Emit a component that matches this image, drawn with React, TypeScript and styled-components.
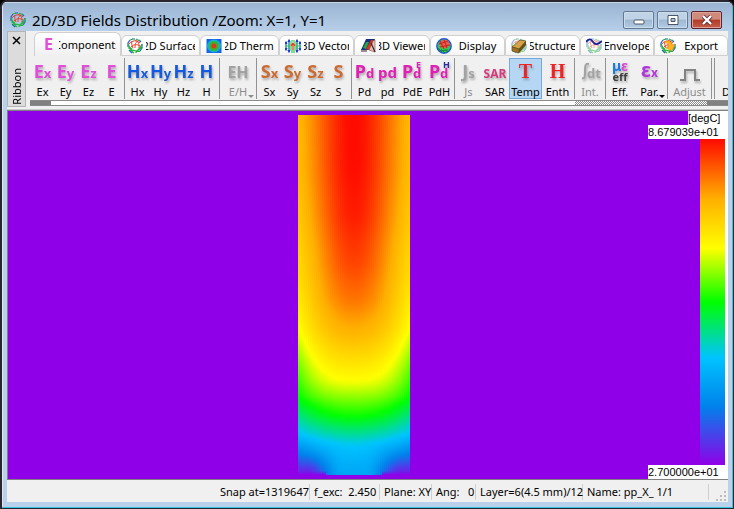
import React from "react";
import styled, { createGlobalStyle, css } from "styled-components";

const UI_FONT = `"Noto Sans", "DejaVu Sans", sans-serif`;

const GlobalStyle = createGlobalStyle`
  * { box-sizing: border-box; }
  body { margin: 0; background: #000; font-family: ${UI_FONT}; color: #000; }
  button { font: inherit; color: inherit; padding: 0; margin: 0; border: 0; background: none; }
`;

/* ---------- window frame ---------- */

const Window = styled.div`
  display: flex;
  flex-direction: column;
  height: 100vh;
  padding: 0 5px 6px;
  background: #b9d1ea;
  border: solid #2a2630;
  border-width: 2px 1px 1px 2px;
  border-radius: 7px 7px 0 0;
  box-shadow: inset -1px -1px 0 #31c5e2, inset 1px 1px 0 #dce9f5;
  overflow: hidden;
`;

const TitleBar = styled.header`
  display: flex;
  align-items: center;
  flex: none;
  height: 29px;
  margin: 0 -4px;
  padding: 6px 10px 0 7px;
  gap: 6px;
  background: linear-gradient(#9ab4d2, #b7cfe9);
  border-top: 1px solid #c7d7e8;
`;

const Title = styled.h1`
  flex: 1;
  margin: 0;
  font-size: 15px;
  font-weight: 400;
  line-height: 20px;
  white-space: nowrap;
  overflow: hidden;
`;

const WindowButtons = styled.div`
  display: flex;
  gap: 3px;
`;

const WindowButton = styled.button<{ $close?: boolean }>`
  display: grid;
  place-items: center;
  width: 31px;
  height: 18px;
  border: 1px solid ${(p) => (p.$close ? "#5b2230" : "#64788f")};
  border-radius: 2px;
  box-shadow: inset 0 0 0 1px ${(p) => (p.$close ? "#dda398" : "#cbdced")};
  background: ${(p) =>
    p.$close
      ? "linear-gradient(#d08a7c 0 45%, #b43a26 50%, #c4604a)"
      : "linear-gradient(#bfd2e6 0 45%, #9db7d3 50%, #b4cbe4)"};
`;

const Client = styled.main`
  flex: 1;
  min-height: 0;
  display: flex;
  flex-direction: column;
  background: #f0f0f0;
`;

/* ---------- ribbon ---------- */

const Ribbon = styled.section`
  display: flex;
  flex: none;
  height: 76px;
`;

const Grip = styled.div`
  display: flex;
  flex-direction: column;
  align-items: center;
  justify-content: space-between;
  flex: none;
  width: 19px;
  padding: 3px 0 1px;
  background: #dcdcdc;
  border: 1px solid #b4b4b4;
`;

const GripClose = styled.button`
  display: grid;
  width: 11px;
  height: 11px;
  place-items: center;
`;

const GripLabel = styled.span`
  writing-mode: vertical-rl;
  transform: rotate(180deg);
  font-size: 11px;
  line-height: 16px;
`;

const RibbonBody = styled.div`
  flex: 1;
  min-width: 0;
  display: flex;
  flex-direction: column;
  padding-left: 4px;
`;

const Tabs = styled.div`
  display: flex;
  align-items: flex-end;
  height: 25px;
  padding-left: 4px;
`;

const Tab = styled.button<{ $active?: boolean; $grow: number }>`
  flex: ${(p) => p.$grow} 1 0;
  min-width: 0;
  display: flex;
  align-items: center;
  gap: 3px;
  height: ${(p) => (p.$active ? 24 : 21)}px;
  padding: 0 4px 0 5px;
  border: 1px solid #d0d0d0;
  border-bottom: ${(p) => (p.$active ? 0 : 1)}px solid #d0d0d0;
  border-radius: 6px 6px 0 0;
  background: ${(p) => (p.$active ? "linear-gradient(#fff, #f0f0f0)" : "linear-gradient(#fff 40%, #f4f4f4)")};
`;

const TabText = styled.span`
  flex: 1;
  min-width: 0;
  display: flex;
  justify-content: center;
  overflow: hidden;
  font-size: 11px;
  line-height: 16px;
  white-space: nowrap;
`;

const Tools = styled.div`
  display: flex;
  height: 44px;
  padding: 2px 0 1px 1px;
  overflow: hidden;
`;

const Separator = styled.span`
  flex: none;
  width: 1px;
  margin: 0 1px;
  background: #929292;
`;

const Tool = styled.button<{ $width: number; $selected?: boolean }>`
  position: relative;
  flex: none;
  display: flex;
  flex-direction: column;
  align-items: center;
  width: ${(p) => p.$width}px;
  font-size: 11px;
  line-height: 15px;
  white-space: nowrap;
  &:disabled { color: #8c8c8c; }
  ${(p) =>
    p.$selected &&
    css`
      background: #b5d7f3;
      box-shadow: inset 0 0 0 1px #74a9dc;
    `}
`;

const ToolIcon = styled.svg`
  display: block;
  flex: none;
  width: 100%;
  height: 26px;
  overflow: visible;
  filter: drop-shadow(1px 2px 1px rgba(0, 0, 0, 0.28));
`;

const DropArrow = styled.i`
  position: absolute;
  right: 1px;
  bottom: 1px;
  border: solid transparent;
  border-width: 3px 3px 0;
  border-top-color: currentColor;
`;

const ScrollStrip = styled.div`
  display: flex;
  height: 6px;
  border: solid #8a8a8a;
  border-width: 1px 0;
  background: #fff;
`;

const StripEnd = styled.span`
  width: 21px;
  background: #808080;
`;

const StripTrack = styled.span`
  width: 132px;
  margin-left: auto;
  background: repeating-conic-gradient(#8c8c8c 0 25%, #fff 0 50%) 0 0 / 2px 2px;
`;

/* ---------- plot ---------- */

const Plot = styled.section`
  flex: 1;
  min-height: 0;
  display: flex;
  margin-top: 3px;
  border: solid #808080;
  border-width: 1px 0 1px 1px;
  background: #8f00e8;
  box-shadow: 0 -1px 0 #c8c8c8;
`;

const Field = styled.div`
  flex: 1;
  min-height: 0;
  display: flex;
  justify-content: center;
  padding: 4px 1px 4px 0;
`;

const HeatSvg = styled.svg`
  display: block;
  width: 112px;
  height: 100%;
`;

const Legend = styled.aside`
  display: flex;
  flex-direction: column;
  align-items: flex-end;
  width: 28px;
  border-right: 3px solid #fff;
`;

const LegendText = styled.span<{ $wide?: boolean }>`
  flex: none;
  height: 14px;
  width: ${(p) => (p.$wide ? 77 : 37)}px;
  background: #fff;
  font: 11px / 14px "Liberation Sans", Arial, sans-serif;
  white-space: nowrap;
`;

const ColorBar = styled.div`
  flex: 1;
  width: 25px;
`;

/* ---------- status bar ---------- */

const Status = styled.footer`
  display: flex;
  align-items: center;
  justify-content: flex-end;
  flex: none;
  height: 22px;
  padding-top: 2px;
  font-size: 11px;
  line-height: 16px;
  white-space: pre;
`;

const StatusCell = styled.span<{ $width?: number }>`
  width: ${(p) => (p.$width ? `${p.$width}px` : "auto")};
  padding: 0 0 0 4px;
  border-right: 1px solid #cfcfcf;
`;

const SizeGrip = styled.svg`
  align-self: flex-end;
  width: 11px;
  height: 10px;
  margin: 0 1px 1px 7px;
`;

/* ---------- temperature field ---------- */

type Point = [number, number];

const PALETTE: [number, number[]][] = [
  [0, [144, 0, 232]],
  [0.18, [0, 130, 235]],
  [0.33, [0, 196, 255]],
  [0.5, [0, 255, 0]],
  [0.665, [255, 255, 0]],
  [0.817, [255, 175, 0]],
  [1, [255, 10, 0]],
];

const rgb = (t: number) => {
  const v = Math.max(0, Math.min(1, t));
  let i = 1;
  while (i < PALETTE.length - 1 && v > PALETTE[i][0]) i++;
  const [a, ca] = PALETTE[i - 1];
  const [b, cb] = PALETTE[i];
  const k = (v - a) / (b - a);
  return `rgb(${ca.map((c, n) => Math.round(c + (cb[n] - c) * k)).join(",")})`;
};

const BAR_GRADIENT = `linear-gradient(to top, ${PALETTE.map(([t]) => `${rgb(t)} ${t * 100}%`).join(", ")})`;

const AXIS: Point[] = [[0, 1], [50, 0.998], [100, 0.98], [150, 0.935], [185, 0.882], [220, 0.8], [266, 0.665], [302, 0.5], [331, 0.33], [345, 0.29], [360, 0.26]];
const WALL: Point[] = [[0, 0.8], [60, 0.79], [110, 0.765], [160, 0.73], [190, 0.695], [212, 0.665], [250, 0.57], [281, 0.5], [318, 0.33], [338, 0.18], [352, 0.08], [360, 0.02]];

const sample = (points: Point[], y: number) => {
  let i = 1;
  while (i < points.length - 1 && y > points[i][0]) i++;
  const [a, va] = points[i - 1];
  const [b, vb] = points[i];
  return va + ((vb - va) * (y - a)) / (b - a);
};

const smooth = (a: number, b: number, v: number) => {
  const k = Math.max(0, Math.min(1, (v - a) / (b - a)));
  return k * k * (3 - 2 * k);
};

const temperature = (x: number, y: number) => {
  const u = Math.abs(x);
  if (y > 356 && u > 0.5) return 0;
  const top = (Math.pow(u, 1.8) + (1 - Math.cos(Math.PI * u)) / 2) / 2;
  const middle = Math.pow(u, 2.5);
  const lower = Math.pow(u, 1.8);
  const base = smooth(0.2, 0.85, u);
  const k1 = smooth(130, 265, y);
  const k2 = smooth(275, 325, y);
  const k3 = smooth(325, 356, y);
  let w = top * (1 - k1) + middle * k1;
  w = w * (1 - k2) + lower * k2;
  w = w * (1 - k3) + base * k3;
  return sample(AXIS, y) * (1 - w) + sample(WALL, y) * w;
};

const COLUMNS = Array.from({ length: 56 }, (_, i) => i);
const ROWS = Array.from({ length: 91 }, (_, i) => i * 4);

const HeatMap = () => (
  <HeatSvg viewBox="0 0 112 360" preserveAspectRatio="none" shapeRendering="crispEdges" role="img" aria-label="Temperature distribution">
    <defs>
      {COLUMNS.map((c) => (
        <linearGradient key={c} id={`col${c}`} x1="0" y1="0" x2="0" y2="1">
          {ROWS.map((y) => (
            <stop key={y} offset={y / 360} stopColor={rgb(temperature((c * 2 + 1 - 56) / 56, y))} />
          ))}
        </linearGradient>
      ))}
    </defs>
    {COLUMNS.map((c) => (
      <rect key={c} x={c * 2} y="0" width="2" height="360" fill={`url(#col${c})`} />
    ))}
  </HeatSvg>
);

/* ---------- icons ---------- */

const Sphere = ({ tone = "mesh" }: { tone?: "mesh" | "solid" | "pale" }) => (
  <g fill="none" strokeWidth="1.2" opacity={tone === "pale" ? 0.5 : 1}>
    {tone === "solid" ? (
      <>
        <circle cx="8" cy="8" r="7.2" fill="#35c653" stroke="#2156d8" strokeWidth="1.400" />
        <path d="M3 5l4-3.500 5 1 2 4-4 4-5-1z" fill="#f4564a" />
        <path d="M4 3l4 8M8 2l3 8M3 6l9-3M4 9l10-2" stroke="#a9211c" strokeWidth="0.800" />
        <path d="M2 10l4 4M5 11l4 4M9 12l3 2M3 13l9-1" stroke="#137a35" strokeWidth="0.800" />
      </>
    ) : (
      <>
        <path d="M1 9V5l2-3M5 1h3M2 12l3 3M15 6v4l-2 3M12 2l2 2" stroke="#2759d8" />
        <path d="M3 2l3-1M9 1l4 2M1 10c3-1 3 4 6 5M9 15c0-4 5-3 6-6M3 13c3-3 7 2 10 0M1 6c1 3 2 4 4 5M15 6c-1 3-2 4-4 6" stroke="#23b53c" />
        <path d="M2 6c3-4 8-4 11-1M4 9c3-3 6-3 9-1M5 3c-1 3 0 4 1 7M11 3c-3 2-3 4-3 7M8 2c4 2 4 4 4 8" stroke="#e8402c" strokeWidth="1" />
      </>
    )}
  </g>
);

const TAB_ICONS: Record<string, React.ReactNode> = {
  components: (
    <text x="4" y="13" fontSize="16" fontWeight="700" fill="#e04fd8">E</text>
  ),
  surface: <Sphere />,
  thermal: (
    <g>
      <rect x="0.500" y="1" width="15" height="14" fill="#1763ea" />
      <ellipse cx="8" cy="8" rx="7" ry="6.500" fill="#19a8e8" />
      <circle cx="8" cy="8" r="5.500" fill="#1dc05c" />
      <circle cx="8" cy="8" r="3.800" fill="#5d9b1e" />
      <circle cx="8" cy="8" r="2.300" fill="#e0351f" />
    </g>
  ),
  vector: (
    <g fill="none" strokeWidth="1.200">
      <path d="M1 4v8M4 2v12M12 2v12M15 4v8" stroke="#1e5ae0" />
      <path d="M0 6l1-2 1 2M0 10l1 2 1-2M3 4l1-2 1 2M3 12l1 2 1-2M11 4l1-2 1 2M11 12l1 2 1-2M14 6l1-2 1 2M14 10l1 2 1-2" stroke="#173bd0" />
      <path d="M0 8h5M11 8h5M7 2v2M9 2v2M7 12v3M9 12v3M3 6h2M11 6h2M3 10h2M11 10h2M6 4v8M10 4v8" stroke="#2fce36" />
      <path d="M8 5v7M6 8l2-3 2 3" stroke="#ee2c24" />
    </g>
  ),
  viewer: (
    <g>
      <path d="M1 12L6 1h9l-3 11z" fill="#19307c" />
      <path d="M3 10l3-6h3l-3 7z" fill="#2aa545" />
      <path d="M6 11l5-9h2l-4 10z" fill="#e0301c" />
      <path d="M9 12l4-9 2-1v12z" fill="#e3c4b8" stroke="#8d5b50" strokeWidth="0.700" />
      <path d="M11 5l4 9M1 13h6" stroke="#42202a" strokeWidth="1.200" />
    </g>
  ),
  display: <Sphere tone="solid" />,
  structure: (
    <g>
      <Sphere tone="pale" />
      <path d="M1 9l8-7 6 1-7 8z" fill="#d5a347" stroke="#634718" strokeWidth="0.700" />
      <path d="M1 9l7 2v4l-7-2z" fill="#9f7427" stroke="#634718" strokeWidth="0.700" />
      <path d="M8 11l7-8v4l-7 8z" fill="#6a4a18" />
    </g>
  ),
  envelope: (
    <g>
      <Sphere tone="pale" />
      <path d="M0 4c3-4 5-3 7 0s5 3 9-1" fill="none" stroke="#1b1f96" strokeWidth="1.800" />
    </g>
  ),
  export: (
    <g>
      <Sphere />
      <path d="M4 4c4-2 7-1 8 3l3-1-3 7-6-3 3-1c0-3-2-4-5-5z" fill="#ffb51c" stroke="#ef9210" strokeWidth="0.600" />
    </g>
  ),
};

const TabIcon = styled.svg`
  flex: none;
  width: 16px;
  height: 16px;
  font-family: ${UI_FONT};
`;

interface GlyphProps {
  main: string;
  sub?: string;
  color: string;
  size?: number;
}

const Glyph = ({ main, sub, color, size = 18 }: GlyphProps) => (
  <text x="50%" y="20" textAnchor="middle" fontSize={size} fontWeight="700" fill={color}>
    {main}
    {sub && <tspan fontSize="13">{sub}</tspan>}
  </text>
);

const PoyntingGlyph = ({ sup, supColor }: { sup: string; supColor: string }) => (
  <g fontWeight="700" fill={MAGENTA}>
    <text x="3" y="20" fontSize="18">P</text>
    <text x="14" y="20" fontSize="13">d</text>
    <text x="17" y="10" fontSize="9" fill={supColor}>{sup}</text>
  </g>
);

const SerifGlyph = styled.text`
  font: 700 20px "Liberation Serif", serif;
  fill: #ee2424;
  text-anchor: middle;
`;

const PINK = "#e04fd8";
const BLUE = "#1559de";
const ORANGE = "#cc6a32";
const MAGENTA = "#e01fb4";
const GREY = "#a2a2a2";

interface ToolItem {
  label: string;
  width: number;
  icon: React.ReactNode;
  disabled?: boolean;
  selected?: boolean;
  arrow?: boolean;
}

const letters = (main: string, color: string): ToolItem[] =>
  ["x", "y", "z", ""].map((s) => ({
    label: main + s,
    width: 23,
    icon: <Glyph main={main} sub={s} color={color} />,
  }));

const GROUPS: ToolItem[][] = [
  letters("E", PINK),
  letters("H", BLUE),
  [{ label: "E/H", width: 34, disabled: true, arrow: true, icon: <Glyph main="EH" color={GREY} size={16} /> }],
  letters("S", ORANGE),
  [
    { label: "Pd", width: 23, icon: <Glyph main="P" sub="d" color={MAGENTA} /> },
    { label: "pd", width: 23, icon: <Glyph main="pd" color={MAGENTA} size={15} /> },
    { label: "PdE", width: 27, icon: <PoyntingGlyph sup="E" supColor={MAGENTA} /> },
    { label: "PdH", width: 27, icon: <PoyntingGlyph sup="H" supColor="#2b2ba8" /> },
  ],
  [
    { label: "Js", width: 25, disabled: true, icon: <Glyph main="J" sub="s" color={GREY} /> },
    { label: "SAR", width: 28, icon: <Glyph main="SAR" color="#d63a7c" size={12} /> },
    { label: "Temp", width: 33, selected: true, icon: <SerifGlyph x="50%" y="20">T</SerifGlyph> },
    { label: "Enth", width: 31, icon: <SerifGlyph x="50%" y="20">H</SerifGlyph> },
  ],
  [
    {
      label: "Int.", width: 28, disabled: true,
      icon: (
        <g fill={GREY}>
          <path d="M6 20c3 1 3-2 3-7s0-8 4-7" fill="none" stroke={GREY} strokeWidth="2" />
          <text x="11" y="20" fontSize="13" fontWeight="700">dt</text>
        </g>
      ),
    },
  ],
  [
    {
      label: "Eff.", width: 26,
      icon: (
        <g fontWeight="700" textAnchor="middle">
          <text x="50%" y="13" fontSize="14" fill="#1c7ce4">μ<tspan fill="#dc48d4">ε</tspan></text>
          <text x="50%" y="23" fontSize="11" fill="#3c3c3c">eff</text>
        </g>
      ),
    },
    {
      label: "Par.", width: 33, arrow: true,
      icon: <text x="50%" y="19" textAnchor="middle" fontSize="20" fontWeight="700" fill="#b435e0">ε<tspan fontSize="12">x</tspan></text>,
    },
  ],
  [
    {
      label: "Adjust", width: 41, disabled: true,
      icon: <path d="M11 22h5V12h10v10h5" fill="none" stroke="#828282" strokeWidth="2" />,
    },
  ],
  [],
];

const TABS = [
  { id: "components", label: "Components", grow: 88 },
  { id: "surface", label: "2D Surface", grow: 80 },
  { id: "thermal", label: "2D Therm.", grow: 79 },
  { id: "vector", label: "3D Vector", grow: 74 },
  { id: "viewer", label: "3D Viewer", grow: 76 },
  { id: "display", label: "Display", grow: 75 },
  { id: "structure", label: "Structure", grow: 74 },
  { id: "envelope", label: "Envelope", grow: 74 },
  { id: "export", label: "Export", grow: 73 },
];

const STATUS = [
  { text: "Snap at=1319647" },
  { text: "f_exc:  2.450", width: 70 },
  { text: "Plane: XY", width: 52 },
  { text: "Ang:   0", width: 44 },
  { text: "Layer=6(4.5 mm)/12", width: 107 },
  { text: "Name: pp_X_ 1/1", width: 126 },
];

export default function App() {
  return (
    <>
      <GlobalStyle />
      <Window>
        <TitleBar>
          <TabIcon viewBox="0 0 16 16"><Sphere /></TabIcon>
          <Title>2D/3D Fields Distribution /Zoom: X=1, Y=1</Title>
          <WindowButtons>
            <WindowButton aria-label="Minimize">
              <svg width="12" height="10"><rect x="1" y="5" width="10" height="4" rx="1" fill="#fff" stroke="#4b5766" /></svg>
            </WindowButton>
            <WindowButton aria-label="Maximize">
              <svg width="12" height="10"><path d="M1 .5h10v9H1zM4 3.500v3h4v-3z" fill="#fff" fillRule="evenodd" stroke="#4b5766" /></svg>
            </WindowButton>
            <WindowButton $close aria-label="Close">
              <svg width="12" height="10"><path d="M2 1l8 8M10 1L2 9" stroke="#553038" strokeWidth="4" /><path d="M2 1l8 8M10 1L2 9" stroke="#fff" strokeWidth="2.400" /></svg>
            </WindowButton>
          </WindowButtons>
        </TitleBar>
        <Client>
          <Ribbon>
            <Grip>
              <GripClose aria-label="Close ribbon">
                <svg width="9" height="9"><path d="M1 1l7 7M8 1L1 8" stroke="#000" strokeWidth="1.500" /></svg>
              </GripClose>
              <GripLabel>Ribbon</GripLabel>
            </Grip>
            <RibbonBody>
              <Tabs role="tablist">
                {TABS.map((t, i) => (
                  <Tab key={t.id} role="tab" aria-selected={i === 0} $active={i === 0} $grow={t.grow}>
                    <TabIcon viewBox="0 0 16 16">{TAB_ICONS[t.id]}</TabIcon>
                    <TabText>{t.label}</TabText>
                  </Tab>
                ))}
              </Tabs>
              <Tools role="toolbar">
                {GROUPS.map((group, g) => (
                  <React.Fragment key={g}>
                    {g > 0 && <Separator />}
                    {group.map((t) => (
                      <Tool key={t.label} $width={t.width} $selected={t.selected} disabled={t.disabled}>
                        <ToolIcon aria-hidden="true">{t.icon}</ToolIcon>
                        {t.label}
                        {t.arrow && <DropArrow />}
                      </Tool>
                    ))}
                  </React.Fragment>
                ))}
                <Separator />
                <Tool $width={50}>
                  <ToolIcon aria-hidden="true" />
                  Default
                </Tool>
              </Tools>
              <ScrollStrip>
                <StripEnd />
                <StripTrack />
                <StripEnd />
              </ScrollStrip>
            </RibbonBody>
          </Ribbon>
          <Plot>
            <Field><HeatMap /></Field>
            <Legend>
              <LegendText>[degC]</LegendText>
              <LegendText $wide>8.679039e+01</LegendText>
              <ColorBar style={{ background: BAR_GRADIENT }} />
              <LegendText $wide>2.700000e+01</LegendText>
            </Legend>
          </Plot>
          <Status>
            {STATUS.map((s) => (
              <StatusCell key={s.text} $width={s.width}>{s.text}</StatusCell>
            ))}
            <SizeGrip viewBox="0 0 11 10" fill="#bdbdbd">
              <path d="M8 0h2v2H8zM4 4h2v2H4zM8 4h2v2H8zM0 8h2v2H0zM4 8h2v2H4zM8 8h2v2H8z" />
            </SizeGrip>
          </Status>
        </Client>
      </Window>
    </>
  );
}
